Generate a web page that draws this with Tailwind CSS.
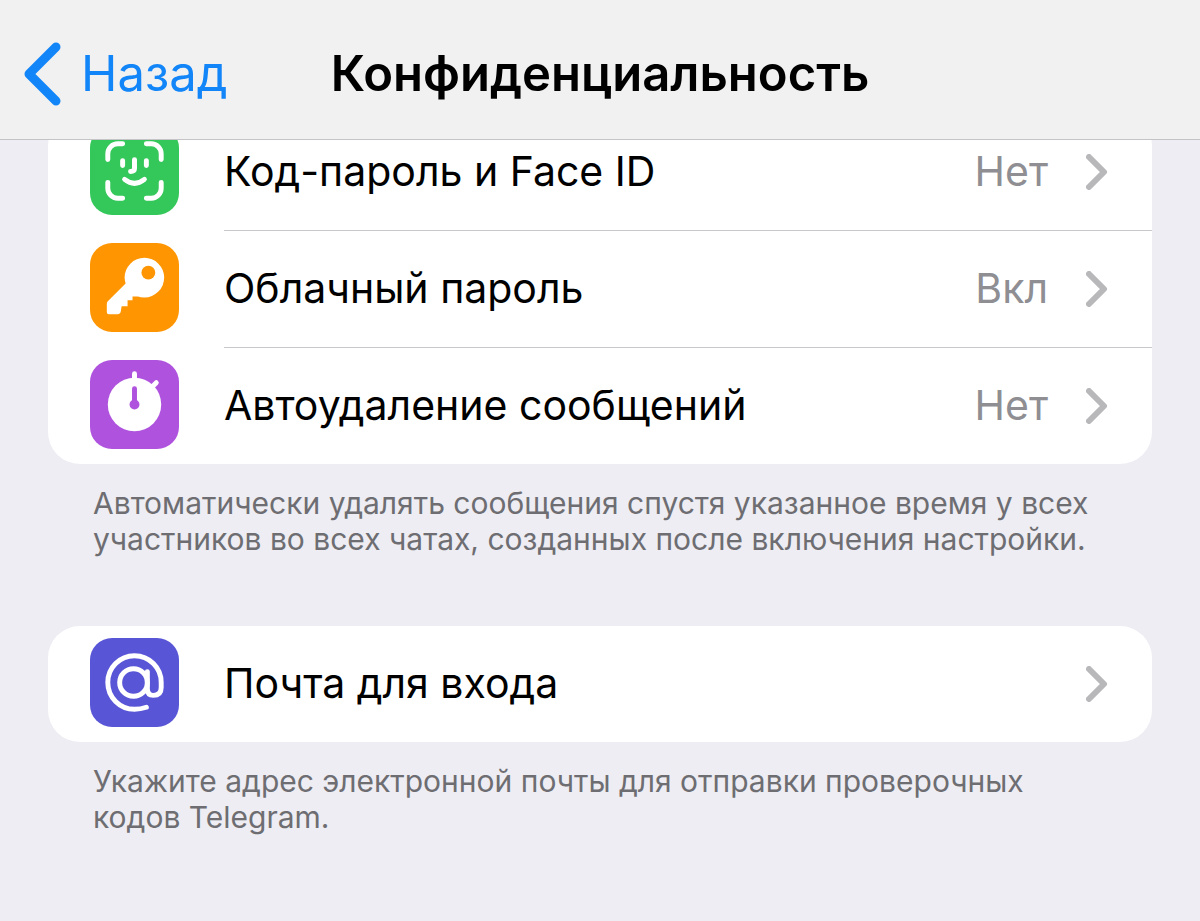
<!DOCTYPE html>
<html lang="ru">
<head>
    <meta charset="UTF-8">
    <meta name="viewport" content="width=device-width, initial-scale=1.0">
    <title>Конфиденциальность</title>
    <script src="https://cdn.jsdelivr.net/npm/@tailwindcss/browser@4"></script>
</head>
<body class="min-h-screen bg-[#eeedf3] font-['Inter',sans-serif] text-black">
    <!-- Nav bar -->
    <header class="relative z-10 grid grid-cols-[1fr_auto_1fr] items-center h-[140px] pt-2 px-6 bg-[#f1f1f1] border-b border-[#c4c4c6]">
        <a href="#" class="flex items-center gap-5 text-[49px] text-[#1285f8]">
            <svg class="w-[37px] h-16" viewBox="0 0 37 64" fill="none" stroke="currentColor" stroke-width="9" stroke-linecap="round" stroke-linejoin="round">
                <path d="M32 5L5 32l27 27"/>
            </svg>
            Назад
        </a>
        <h1 class="text-[49px] font-semibold">Конфиденциальность</h1>
    </header>

    <main class="px-12">
        <!-- Security, first row is scrolled under the nav bar -->
        <section class="-mt-[26px]">
            <div class="bg-white rounded-[32px] overflow-hidden">
                <a href="#" class="flex gap-[45px] h-[117px] pl-[42px]">
                    <svg class="mt-3 size-[89px] shrink-0 rounded-[22px] bg-[#34c759]" viewBox="0 0 90 90" fill="none" stroke="#fff" stroke-width="5" stroke-linecap="round">
                        <path d="M33 18h-5a10 10 0 0 0-10 10v6M57 18h5a10 10 0 0 1 10 10v6M33 73h-5a10 10 0 0 1-10-10v-6M57 73h5a10 10 0 0 0 10-10v-6"/>
                        <path d="M33 35v5M57 35v5M45 34v9q0 3-4 3M35 54q10 8 20 0"/>
                    </svg>
                    <span class="flex flex-1 items-center border-b border-[#c8c7cc] pr-11 text-[41px]">
                        <span class="flex-1">Код-пароль и Face ID</span>
                        <span class="text-[#8e8e93]">Нет</span>
                        <svg class="ml-[38px] w-[22px] h-9" viewBox="0 0 22 36" fill="none" stroke="#b8b8bb" stroke-width="6" stroke-linecap="round" stroke-linejoin="round">
                            <path d="M3 3l15 15L3 33"/>
                        </svg>
                    </span>
                </a>
                <a href="#" class="flex gap-[45px] h-[117px] pl-[42px]">
                    <svg class="mt-3 size-[89px] shrink-0 rounded-[22px] bg-[#ff9500]" viewBox="0 0 90 90" fill="#fff">
                        <path d="M36 41L18 59q-1 1-1 3v8q0 2 2 2h9q2 0 3-2l1-6h6v-6h5v-4h5l6-2z"/>
                        <circle cx="55" cy="35" r="20"/>
                        <circle cx="59" cy="30" r="7" fill="#ff9500"/>
                    </svg>
                    <span class="flex flex-1 items-center border-b border-[#c8c7cc] pr-11 text-[41px]">
                        <span class="flex-1">Облачный пароль</span>
                        <span class="text-[#8e8e93]">Вкл</span>
                        <svg class="ml-[38px] w-[22px] h-9" viewBox="0 0 22 36" fill="none" stroke="#b8b8bb" stroke-width="6" stroke-linecap="round" stroke-linejoin="round">
                            <path d="M3 3l15 15L3 33"/>
                        </svg>
                    </span>
                </a>
                <a href="#" class="flex gap-[45px] h-[116px] pl-[42px]">
                    <svg class="mt-3 size-[89px] shrink-0 rounded-[22px] bg-[#af52de]" viewBox="0 0 90 90" fill="none" stroke="#fff" stroke-width="5" stroke-linecap="round">
                        <circle cx="45" cy="45" r="27" fill="#fff" stroke="none"/>
                        <path d="M45 14v8M67 23l-9 9"/>
                        <path d="M45 29v16" stroke="#af52de"/>
                        <circle cx="45" cy="45" r="5" fill="#af52de" stroke="none"/>
                    </svg>
                    <span class="flex flex-1 items-center pr-11 text-[41px]">
                        <span class="flex-1">Автоудаление сообщений</span>
                        <span class="text-[#8e8e93]">Нет</span>
                        <svg class="ml-[38px] w-[22px] h-9" viewBox="0 0 22 36" fill="none" stroke="#b8b8bb" stroke-width="6" stroke-linecap="round" stroke-linejoin="round">
                            <path d="M3 3l15 15L3 33"/>
                        </svg>
                    </span>
                </a>
            </div>
            <p class="pt-[21px] pl-[45px] pr-10 text-[30px] leading-9 text-[#6d6d72]">Автоматически удалять сообщения спустя указанное время у всех участников во всех чатах, созданных после включения настройки.</p>
        </section>

        <!-- Login email -->
        <section class="mt-[69px]">
            <div class="bg-white rounded-[32px] overflow-hidden">
                <a href="#" class="flex gap-[45px] h-[116px] pl-[42px]">
                    <svg class="mt-3 size-[89px] shrink-0 rounded-[22px] bg-[#5856d6]" viewBox="0 0 90 90" fill="none" stroke="#fff" stroke-width="5" stroke-linecap="round">
                        <circle cx="44" cy="45" r="14"/>
                        <path d="M58 34v17q0 7 6 7 8 0 8-8v-5A27 27 0 1 0 45 72q6 0 12-2"/>
                    </svg>
                    <span class="flex flex-1 items-center pr-11 text-[41px]">
                        <span class="flex-1">Почта для входа</span>
                        <svg class="ml-[38px] w-[22px] h-9" viewBox="0 0 22 36" fill="none" stroke="#b8b8bb" stroke-width="6" stroke-linecap="round" stroke-linejoin="round">
                            <path d="M3 3l15 15L3 33"/>
                        </svg>
                    </span>
                </a>
            </div>
            <p class="pt-[21px] pl-[45px] pr-10 text-[30px] leading-9 text-[#6d6d72]">Укажите адрес электронной почты для отправки проверочных кодов Telegram.</p>
        </section>
    </main>
</body>
</html>
